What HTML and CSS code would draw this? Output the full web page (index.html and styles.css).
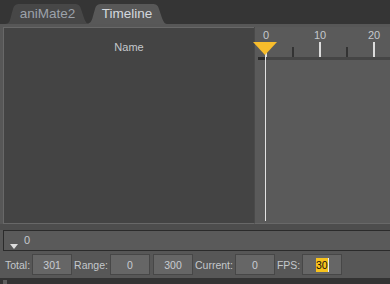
FILE: index.html
```html
<!DOCTYPE html>
<html lang="en">
<head>
  <meta charset="UTF-8">
  <title>aniMate2 Timeline</title>
  <link rel="stylesheet" href="styles.css">
</head>
<body>
  <div class="tabbar">
    <div class="tab">aniMate2</div>
    <div class="tab active">Timeline</div>
  </div>

  <div class="frame">
    <div class="panes">
      <div class="names">Name</div>
      <div class="track">
        <svg class="ruler" width="135" height="194" viewBox="0 0 135 194">
          <text x="11" y="12">0</text>
          <text x="65" y="12">10</text>
          <text x="119" y="12">20</text>
          <rect x="10" y="15" width="2" height="15" fill="#dcdcdc"/>
          <rect x="37" y="20" width="2" height="10" fill="#333"/>
          <rect x="64" y="15" width="2" height="15" fill="#dcdcdc"/>
          <rect x="91" y="20" width="2" height="10" fill="#333"/>
          <rect x="118" y="15" width="2" height="15" fill="#dcdcdc"/>
          <rect x="3" y="30" width="132" height="3" fill="#454545"/>
          <rect x="3" y="30" width="7" height="3" fill="#2a2a2a"/>
          <rect x="10" y="28" width="1" height="166" fill="#e2e2e2"/>
          <polygon points="-2,15 22,15 10,28" fill="#f8bd2c"/>
        </svg>
      </div>
    </div>

    <div class="gap"></div>

    <div class="scrub">
      <span class="marker"></span>
      <span class="frame-no">0</span>
    </div>

    <div class="toolbar">
      <span class="label">Total:</span>
      <span class="box">301</span>
      <span class="label">Range:</span>
      <span class="box">0</span>
      <span class="box">300</span>
      <span class="label">Current:</span>
      <span class="box">0</span>
      <span class="label">FPS:</span>
      <span class="box"><span class="selected">30</span><span class="cursor"></span></span>
    </div>
  </div>

  <div class="status"><span class="grip"></span></div>
</body>
</html>
```

FILE: styles.css
```css
html, body {
  margin: 0;
  width: 390px;
  height: 284px;
  overflow: hidden;
}
body {
  font-family: "Liberation Sans", Arial, sans-serif;
  font-size: 11px;
  background: #575757;
  color: #c4c8cc;
}
.tabbar {
  height: 24px;
  background: #353535;
  display: flex;
  align-items: flex-end;
  padding-left: 5px;
}
.tab {
  width: 85px;
  height: 20px;
  line-height: 20px;
  text-align: center;
  font-size: 13.5px;
  color: #9ca2aa;
  background: #474747;
  clip-path: path("M0 20 C4 20 5 17 6 12 L8 5 C9 1 11 0 15 0 L69 0 C73 0 75 1 76 5 L79 14 C81 19 82 20 85 20 Z");
}
.tab.active {
  width: 82px;
  margin-left: -4px;
  color: #d4d8de;
  background: #585858;
  clip-path: path("M0 20 C4 20 6 17 7 12 L9 5 C10 1 12 0 16 0 L66 0 C70 0 72 1 73 5 L76 14 C78 19 79 20 82 20 Z");
}
.frame {
  padding-top: 3px;
}
.panes {
  display: flex;
  height: 197px;
  padding-left: 3px;
}
.names {
  width: 251px;
  box-sizing: border-box;
  background: #444;
  border: 1px solid #686868;
  border-right: none;
  text-align: center;
  padding-top: 13px;
}
.track {
  flex: 1;
  background: #5a5a5a;
  border-left: 1px solid #4a4a4a;
  border-bottom: 1px solid #686868;
}
.ruler {
  display: block;
  overflow: visible;
}
.ruler text {
  font-family: "Liberation Sans", Arial, sans-serif;
  font-size: 11px;
  fill: #c4c8cc;
  text-anchor: middle;
}
.gap {
  height: 6px;
  background: #4d4d4d;
}
.scrub {
  height: 19px;
  margin-left: 3px;
  background: #5a5a5a;
  border: 1px solid #2b2b2b;
  border-right: none;
  position: relative;
}
.marker {
  position: absolute;
  left: 6px;
  bottom: 1px;
  border-left: 4px solid transparent;
  border-right: 4px solid transparent;
  border-top: 5px solid #dedede;
}
.frame-no {
  position: absolute;
  left: 20px;
  top: 3px;
}
.toolbar {
  height: 27px;
  display: flex;
  align-items: center;
  padding-left: 5px;
  font-size: 10.5px;
}
.label {
  margin-right: 2px;
}
.box {
  width: 40px;
  height: 21px;
  box-sizing: border-box;
  background: #666;
  border: 1px solid #474747;
  display: flex;
  align-items: center;
  justify-content: center;
  margin-right: 2px;
  color: #c8ccd2;
}
.box + .box {
  margin-left: 1px;
}
.selected {
  background: #f7c21c;
  color: #111;
  line-height: 14px;
}
.cursor {
  width: 1px;
  height: 14px;
  background: #eee;
}
.status {
  height: 6px;
  background: #333;
  position: relative;
}
.grip {
  position: absolute;
  left: 3px;
  top: 2px;
  width: 4px;
  height: 4px;
  background: #5e5e5e;
}
```
